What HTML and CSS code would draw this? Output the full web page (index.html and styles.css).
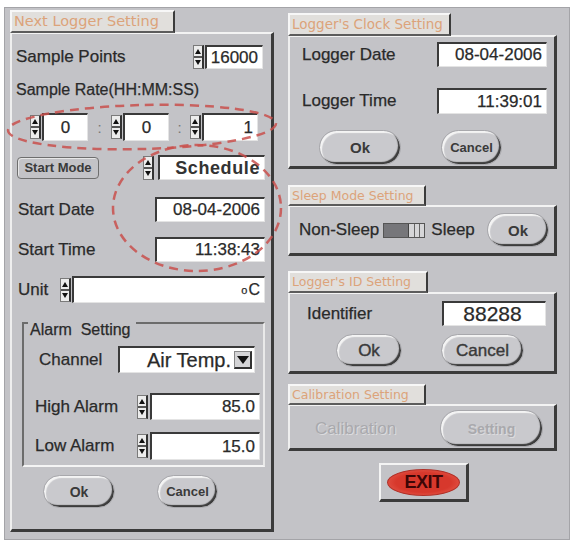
FILE: index.html
```html
<!DOCTYPE html>
<html lang="en">
<head>
  <meta charset="UTF-8" />
  <meta name="viewport" content="width=device-width, initial-scale=1.0"/>
  <title>Logger Setting</title>
  <link rel="stylesheet" href="styles.css">
</head>
<body>

  <div class="window">

    <div class="col-left">
      <div class="tab tab-next">Next Logger Setting</div>
      <div class="panel panel-next">

        <div class="row row-points">
          <span>Sample Points</span>
          <span class="field"><span class="spin"></span><span class="box w-points">16000</span></span>
        </div>

        <div class="row row-rate"><span>Sample Rate(HH:MM:SS)</span></div>

        <div class="row row-hms">
          <span class="field"><span class="spin"></span><span class="box w-hh centre">0</span></span>
          <span class="colon">:</span>
          <span class="field"><span class="spin"></span><span class="box w-hh centre">0</span></span>
          <span class="colon">:</span>
          <span class="field"><span class="spin"></span><span class="box w-ss">1</span></span>
        </div>

        <div class="row row-mode">
          <span class="mode-btn">Start Mode</span>
          <span class="field gap-4"><span class="spin"></span><span class="box w-mode">Schedule</span></span>
        </div>

        <div class="row row-date">
          <span>Start Date</span>
          <span class="box w-date">08-04-2006</span>
        </div>

        <div class="row row-time">
          <span>Start Time</span>
          <span class="box w-date">11:38:43</span>
        </div>

        <div class="row row-unit">
          <span>Unit</span>
          <span class="field grow"><span class="spin"></span><span class="box w-unit"><span class="deg">o</span>C</span></span>
        </div>

        <div class="group">
          <div class="group-label">Alarm&nbsp; Setting</div>

          <div class="row row-channel">
            <span>Channel</span>
            <span class="box select">Air Temp.<span class="drop"></span></span>
          </div>

          <div class="row row-high">
            <span>High Alarm</span>
            <span class="field"><span class="spin"></span><span class="box w-alarm">85.0</span></span>
          </div>

          <div class="row row-low">
            <span>Low Alarm</span>
            <span class="field"><span class="spin"></span><span class="box w-alarm">15.0</span></span>
          </div>
        </div>

        <div class="row row-buttons">
          <span class="rbtn btn-ok-main">Ok</span>
          <span class="rbtn btn-cancel-main">Cancel</span>
        </div>

      </div>
    </div>

    <div class="col-right">

      <div class="tab tab-clock">Logger's Clock Setting</div>
      <div class="panel panel-clock">
        <div class="row row-ldate">
          <span>Logger Date</span>
          <span class="box w-ldate">08-04-2006</span>
        </div>
        <div class="row row-ltime">
          <span>Logger Time</span>
          <span class="box w-ldate">11:39:01</span>
        </div>
        <div class="row row-cbuttons">
          <span class="rbtn btn-ok-clock">Ok</span>
          <span class="rbtn btn-cancel-clock">Cancel</span>
        </div>
      </div>

      <div class="tab tab-small tab-sleep">Sleep Mode Setting</div>
      <div class="panel panel-sleep">
        <div class="row row-sleep">
          <span>Non-Sleep</span>
          <span class="toggle"><span class="toggle-on"></span><span class="toggle-off"></span></span>
          <span>Sleep</span>
          <span class="rbtn btn-ok-sleep">Ok</span>
        </div>
      </div>

      <div class="tab tab-small tab-id">Logger's ID Setting</div>
      <div class="panel panel-id">
        <div class="row row-ident">
          <span>Identifier</span>
          <span class="box w-ident">88288</span>
        </div>
        <div class="row row-ibuttons">
          <span class="rbtn btn-ok-id">Ok</span>
          <span class="rbtn btn-cancel-id">Cancel</span>
        </div>
      </div>

      <div class="tab tab-small tab-calib">Calibration Setting</div>
      <div class="panel panel-calib">
        <div class="row row-calib">
          <span class="disabled">Calibration</span>
          <span class="rbtn btn-setting disabled">Setting</span>
        </div>
      </div>

      <div class="exit-box"><span class="exit">EXIT</span></div>
    </div>

  </div>

  <!-- hand-drawn red marks over the screenshot -->
  <svg class="marks" width="574" height="542" viewBox="0 0 574 542">
    <ellipse cx="142" cy="127" rx="134" ry="22" transform="rotate(-1.5 142 127)"/>
    <ellipse cx="197" cy="208" rx="84" ry="63"/>
  </svg>

</body>
</html>
```

FILE: styles.css
```css
body {
  margin: 0;
  background: #fff;
  font-family: "Liberation Sans", Arial, sans-serif;
  font-size: 17px;
  color: #2a2a2a;
  -webkit-text-stroke: 0.25px #2a2a2a;
  position: relative;
}

.window {
  box-sizing: border-box;
  margin: 7px 0 0 4px;
  width: 566px;
  height: 533px;
  padding: 2px 0 0 5px;
  background: #c3c3c7;
  border: 1px solid #a4a4a8;
  display: flex;
  gap: 14px;
}

.col-left {
  width: 264px;
  display: flex;
  flex-direction: column;
}

.col-right {
  width: 269px;
  display: flex;
  flex-direction: column;
}

/* tabs and panels */

.tab {
  box-sizing: border-box;
  height: 23px;
  padding-left: 2px;
  line-height: 19px;
  white-space: nowrap;
  background: #e1dfdc;
  color: #dca37a;
  -webkit-text-stroke: 0;
  font-family: "DejaVu Sans", sans-serif;
  font-size: 14.5px;
  border-top: 2px solid #f7f7f7;
  border-left: 2px solid #f7f7f7;
  border-right: 2px solid #3b3b3b;
  border-bottom: 2px solid #5c5c5c;
  margin-bottom: -1px;
  position: relative;
  z-index: 1;
}

.tab-small {
  font-size: 12.5px;
  height: 21px;
  line-height: 17px;
}

.tab-next { width: 165px; }
.tab-clock { width: 163px; margin-top: 3px; font-size: 13.5px; }
.tab-sleep { width: 138px; margin-top: 16px; }
.tab-id { width: 140px; margin-top: 15px; height: 22px; }
.tab-calib { width: 138px; margin-top: 10px; }

.panel {
  box-sizing: border-box;
  border-style: solid;
  border-width: 2px 3px 3px 2px;
  border-color: #f3f3f3 #3b3b3b #3b3b3b #efefef;
  display: flex;
  flex-direction: column;
}

.panel-next { height: 500px; padding: 0 6px 0 4px; }
.panel-clock { height: 134px; padding: 0 7px 0 12px; }
.panel-sleep { height: 51px; padding: 0 5px 0 9px; }
.panel-id { height: 82px; padding: 0 8px 0 17px; }
.panel-calib { height: 47px; padding: 0 11px 0 25px; }

.row {
  display: flex;
  align-items: center;
  justify-content: space-between;
  flex-shrink: 0;
}

/* inputs */

.field {
  display: flex;
  align-items: stretch;
  gap: 1px;
  height: 100%;
}

.gap-4 { gap: 4px; }

.grow {
  flex: 1;
  margin-left: 12px;
}

.spin {
  box-sizing: border-box;
  width: 11px;
  align-self: center;
  height: 24px;
  padding: 3px 0;
  background: linear-gradient(#ececec 46%, #555 46%, #555 54%, #ececec 54%);
  border: 1px solid #7a7a7a;
  border-right: 2px solid #333;
  display: flex;
  flex-direction: column;
  align-items: center;
  justify-content: space-between;
}

.spin::before {
  content: "";
  border-left: 3px solid transparent;
  border-right: 3px solid transparent;
  border-bottom: 5px solid #111;
}

.spin::after {
  content: "";
  border-left: 3px solid transparent;
  border-right: 3px solid transparent;
  border-top: 5px solid #111;
}

.box {
  box-sizing: border-box;
  height: 100%;
  background: #fff;
  border-top: 2px solid #3a3a3a;
  border-left: 2px solid #3a3a3a;
  border-right: 1px solid #e4e4e4;
  border-bottom: 1px solid #e4e4e4;
  padding-right: 4px;
  font-size: 17px;
  display: flex;
  align-items: center;
  justify-content: flex-end;
}

.centre { justify-content: center; padding-right: 0; }

.w-points { width: 58px; }
.w-hh { width: 46px; }
.w-ss { width: 56px; }
.w-mode { width: 107px; font-size: 18px; font-weight: bold; letter-spacing: 0.6px; color: #333; -webkit-text-stroke: 0; }
.w-date { width: 110px; }
.w-unit { flex: 1; font-size: 16px; }
.w-alarm { width: 110px; }
.w-ldate { width: 110px; }
.w-ident { width: 104px; font-size: 21px; justify-content: center; }

.deg {
  font-size: 11px;
  margin-right: 1px;
}

.colon {
  font-size: 15px;
  color: #777;
  -webkit-text-stroke: 0;
  text-align: center;
}

/* left panel rows */

.row-points { margin-top: 11px; height: 24px; padding-right: 2px; }
.row-rate { margin-top: 11px; height: 20px; font-size: 16px; }

.row-hms {
  margin-top: 13px;
  height: 28px;
  justify-content: flex-start;
  padding-left: 14px;
}

.row-hms .colon:nth-child(2) { width: 23px; }
.row-hms .colon:nth-child(4) { width: 21px; }

.row-mode { margin-top: 14px; height: 25px; }
.row-date { margin-top: 17px; height: 25px; padding-left: 2px; }
.row-time { margin-top: 15px; height: 25px; padding-left: 2px; }
.row-unit { margin-top: 14px; height: 27px; padding-left: 2px; }

.mode-btn {
  box-sizing: border-box;
  width: 82px;
  height: 22px;
  margin-left: 1px;
  border: 1px solid #6e6e6e;
  border-radius: 4px;
  box-shadow: inset 1px 1px 0 #e6e6e6;
  font-size: 13px;
  font-weight: bold;
  color: #3a3a3a;
  -webkit-text-stroke: 0;
  display: flex;
  align-items: center;
  justify-content: center;
}

.group {
  box-sizing: border-box;
  height: 145px;
  margin: 19px 0 0 6px;
  border-style: solid;
  border-width: 2px;
  border-color: #6c6c6c #e9e9e9 #f4f4f4 #6c6c6c;
  display: flex;
  flex-direction: column;
}

.group-label {
  align-self: flex-start;
  margin: -2px 0 0 4px;
  padding: 0 6px 0 2px;
  line-height: 16px;
  font-size: 16px;
  background: #c3c3c7;
}

.row-channel { margin-top: 8px; height: 27px; padding: 0 8px 0 15px; }
.row-high { margin-top: 20px; height: 27px; padding: 0 3px 0 11px; }
.row-low { margin-top: 12px; height: 28px; padding: 0 3px 0 11px; }

.row-high .field, .row-low .field { gap: 2px; }

.select {
  width: 137px;
  font-size: 20px;
  padding-right: 2px;
  gap: 3px;
}

.drop {
  box-sizing: border-box;
  width: 18px;
  height: 18px;
  background: #d4d4d6;
  border: 1px solid #888;
  border-right: 2px solid #333;
  border-bottom: 2px solid #333;
  display: flex;
  align-items: center;
  justify-content: center;
}

.drop::after {
  content: "";
  border-left: 6px solid transparent;
  border-right: 6px solid transparent;
  border-top: 8px solid #111;
}

.row-buttons {
  margin-top: 8px;
  height: 33px;
  justify-content: flex-start;
  padding-left: 27px;
  gap: 42px;
}

/* round buttons */

.rbtn {
  box-sizing: border-box;
  height: 100%;
  border-radius: 18px;
  background: #c9c9cd;
  border: 1px solid #a8a8ac;
  box-shadow: inset -2px -2px 1px #3c3c3c, inset 2px 2px 1px #f4f4f4;
  font-size: 14px;
  font-weight: bold;
  color: #3a3a3a;
  -webkit-text-stroke: 0;
  display: flex;
  align-items: center;
  justify-content: center;
}

.btn-ok-main { width: 72px; }
.btn-cancel-main { width: 61px; font-size: 13px; }

/* right panels */

.row-ldate { margin-top: 5px; height: 25px; }
.row-ltime { margin-top: 21px; height: 26px; }

.row-cbuttons {
  margin-top: 16px;
  height: 35px;
  justify-content: flex-start;
  padding-left: 17px;
  gap: 40px;
}

.btn-ok-clock { width: 82px; font-size: 15px; }
.btn-cancel-clock { width: 61px; font-size: 13px; }

.row-sleep {
  margin-top: 6px;
  height: 34px;
  justify-content: flex-start;
}

.toggle {
  box-sizing: border-box;
  width: 42px;
  height: 15px;
  margin: 0 6px 0 4px;
  border: 1px solid #555;
  display: flex;
}

.toggle-on {
  width: 24px;
  background: #76767a;
}

.toggle-off {
  flex: 1;
  border-left: 1px solid #444;
  background:
    linear-gradient(90deg, transparent 5px, #666 5px, #666 6px, transparent 6px, transparent 10px, #666 10px, #666 11px, transparent 11px),
    #d6d6d8;
}

.btn-ok-sleep {
  width: 62px;
  margin-left: auto;
  font-size: 15px;
}

.row-ident { margin-top: 7px; height: 25px; }

.row-ibuttons {
  margin-top: 8px;
  height: 33px;
  justify-content: flex-start;
  padding-left: 29px;
  gap: 39px;
}

.btn-ok-id { width: 66px; font-size: 17px; font-weight: normal; -webkit-text-stroke: 0.4px #3a3a3a; }
.btn-cancel-id { width: 83px; font-size: 17px; font-weight: normal; -webkit-text-stroke: 0.4px #3a3a3a; }

.row-calib { margin-top: 4px; height: 37px; }

.btn-setting { width: 103px; font-size: 14px; }

.disabled {
  color: #a9a9ad;
  -webkit-text-stroke: 0;
  text-shadow: 1px 1px 0 #dcdcde;
}

.exit-box {
  box-sizing: border-box;
  align-self: flex-start;
  width: 90px;
  height: 39px;
  margin: 12px 0 0 91px;
  border-style: solid;
  border-width: 2px 3px 3px 2px;
  border-color: #f4f4f4 #3b3b3b #3b3b3b #f4f4f4;
  display: flex;
  align-items: center;
  justify-content: center;
}

.exit {
  box-sizing: border-box;
  width: 73px;
  height: 27px;
  border-radius: 50%;
  background: radial-gradient(ellipse at center, #d7382c 55%, #e65a4c 85%, #f08a80 100%);
  border: 1px solid #b03028;
  color: #3d0606;
  -webkit-text-stroke: 0;
  font-size: 18px;
  font-weight: bold;
  letter-spacing: -0.5px;
  display: flex;
  align-items: center;
  justify-content: center;
}

/* red annotation marks */

.marks {
  position: absolute;
  top: 0;
  left: 0;
  pointer-events: none;
}

.marks ellipse {
  fill: none;
  stroke: #c9504c;
  stroke-width: 2.5;
  stroke-dasharray: 9 6;
  opacity: 0.85;
}
```
